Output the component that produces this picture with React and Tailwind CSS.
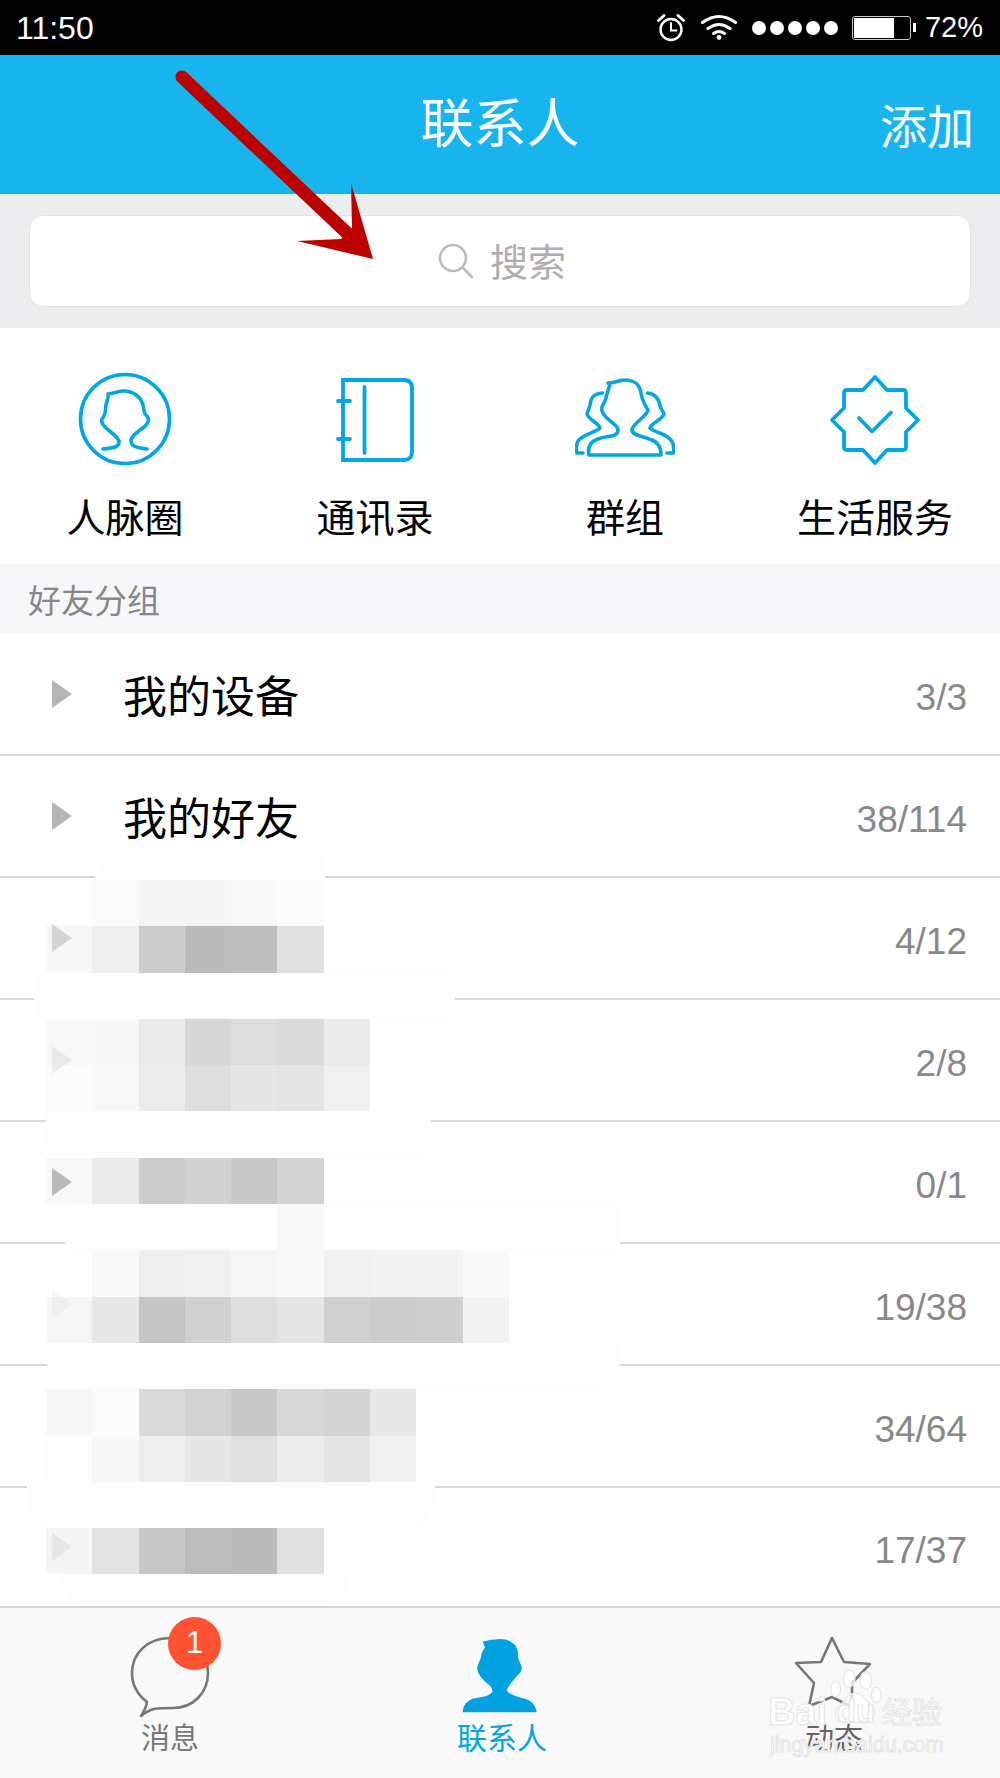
import React from "react";

const rows = [
  { label: "我的设备", count: "3/3", tri: "opacity-100" },
  { label: "我的好友", count: "38/114", tri: "opacity-100" },
  { label: "", count: "4/12", tri: "opacity-50" },
  { label: "", count: "2/8", tri: "opacity-20" },
  { label: "", count: "0/1", tri: "opacity-90" },
  { label: "", count: "19/38", tri: "opacity-10" },
  { label: "", count: "34/64", tri: "opacity-0" },
  { label: "", count: "17/37", tri: "opacity-20" },
];

// mosaic that hides the group names, one array per 46px row
const tiles = [
  ["bg-[#fefefe]", "bg-[#fbfbfb]", "bg-[#f4f4f4]", "bg-[#f5f5f5]", "bg-[#f8f8f8]", "bg-[#fbfbfb]"],
  ["bg-[#f7f7f7]", "bg-[#efefef]", "bg-[#cdcdcd]", "bg-[#bbbbbb]", "bg-[#bebebe]", "bg-[#e1e1e1]"],
  [],
  ["bg-[#f8f8f8]", "bg-[#f7f7f7]", "bg-[#ebebeb]", "bg-[#d7d7d7]", "bg-[#dddddd]", "bg-[#dadada]", "bg-[#ebebeb]"],
  ["bg-[#fcfcfc]", "bg-[#f8f8f8]", "bg-[#ececec]", "bg-[#dddddd]", "bg-[#e6e6e6]", "bg-[#e4e4e4]", "bg-[#f0f0f0]"],
  [],
  ["bg-[#f8f8f8]", "bg-[#ebebeb]", "bg-[#cdcdcd]", "bg-[#d1d1d1]", "bg-[#c8c8c8]", "bg-[#d4d4d4]"],
  ["", "", "", "", "", "bg-[#f8f8f8]"],
  ["", "bg-[#f9f9f9]", "bg-[#eeeeee]", "bg-[#f0f0f0]", "bg-[#f6f6f6]", "bg-[#f9f9f9]", "bg-[#f1f1f1]", "bg-[#f3f3f3]", "bg-[#f3f3f3]", "bg-[#fafafa]"],
  ["bg-[#f6f6f6]", "bg-[#e8e8e8]", "bg-[#c5c5c5]", "bg-[#d1d1d1]", "bg-[#dedede]", "bg-[#e4e4e4]", "bg-[#d0d0d0]", "bg-[#cccccc]", "bg-[#cfcfcf]", "bg-[#f3f3f3]"],
  [],
  ["bg-[#f6f6f6]", "bg-[#fbfbfb]", "bg-[#dadada]", "bg-[#d2d2d2]", "bg-[#c8c8c8]", "bg-[#d8d8d8]", "bg-[#d4d4d4]", "bg-[#e8e8e8]"],
  ["bg-[#fdfdfd]", "bg-[#f7f7f7]", "bg-[#eeeeee]", "bg-[#e6e6e6]", "bg-[#e0e0e0]", "bg-[#ececec]", "bg-[#e5e5e5]", "bg-[#f1f1f1]"],
  [],
  ["bg-[#f5f5f5]", "bg-[#e3e3e3]", "bg-[#c8c8c8]", "bg-[#bcbcbc]", "bg-[#bbbbbb]", "bg-[#e0e0e0]"],
];

const smudges = [
  "left-[95px] top-[221px] w-[230px] h-[25px] rounded-tl-[60px] rounded-tr-[10px]",
  "left-[34px] top-[338px] w-[421px] h-[47px] rounded-[10px]",
  "left-[46px] top-[477px] w-[385px] h-[46px] rounded-b-[10px]",
  "left-[65px] top-[570px] w-[555px] h-[47px] rounded-[6px]",
  "left-[47px] top-[708px] w-[573px] h-[47px] rounded-br-[30px]",
  "left-[27px] top-[847px] w-[408px] h-[47px] rounded-b-[30px]",
  "left-[60px] top-[940px] w-[290px] h-[32px] rounded-b-[60px]",
];

const IconCircle = () => (
  <svg viewBox="0 0 100 100" className="w-[100px] h-[100px]" fill="none" stroke="#00a7e1" strokeWidth="3.6" strokeLinecap="round" strokeLinejoin="round">
    <ellipse cx="50" cy="50" rx="44.5" ry="44.5" />
    <path d="M28 80C36 79 44 79 44 73C44 68 36 64 31 59C27 55 26 52 27 50C31 46 30 43 31 36C32 31 34 28 33 25C40 24 43 22 49 22C58 22 66 28 68 36C69 41 69 45 71 46C75 50 74 53 70 57C65 62 56 66 56 72C56 78 64 79 72 80" />
  </svg>
);

const IconBook = () => (
  <svg viewBox="0 0 100 100" className="w-[100px] h-[100px]" fill="none" stroke="#00a7e1" strokeWidth="3.8" strokeLinecap="round">
    <path d="M18 11H79Q87 11 87 19V83Q87 91 79 91H18Z" strokeLinecap="butt" />
    <path d="M39.5 18V84M13 32H25M13 70H25" />
  </svg>
);

const IconGroup = () => (
  <svg viewBox="0 0 100 100" className="w-[100px] h-[100px]" fill="none" stroke="#00a7e1" strokeWidth="3.6" strokeLinecap="round" strokeLinejoin="round">
    <path d="M14 86C12 76 18 71 26 69C33 67 43 68 43 61C43 55 33 53 28 44C25 39 28 36 30 32C32 26 33 20 35 16L33 14C40 14 44 11 50 11C59 11 65 16 66 24C67 30 69 35 73 41C72 47 60 53 57 60C56 66 66 67 74 70C82 72 86 77 86 86Z" />
    <path d="M27.5 24C20 25 16 27 15 36C14 41 12 43 12 45C14 51 24 54 25 59C20 64 8 65 3 72C1 76 1 80 1.5 84H8" />
    <path d="M72.5 24C80 25 84 29 85 37C86 41 89 43 89 45C87 51 76 54 75 59C80 64 90 64 96 71C99 75 99 80 98.5 84H92" />
  </svg>
);

const IconBadge = () => (
  <svg viewBox="0 0 100 100" className="w-[100px] h-[100px]" fill="none" stroke="#00a7e1" strokeWidth="3.8" strokeLinecap="round" strokeLinejoin="round">
    <path d="M50 8L62 21H78Q81 21 81 24V39L93 51L81 63V78Q81 81 78 81H62L50 94L38 81H22Q19 81 19 78V63L7 51L19 39V24Q19 21 22 21H38Z" />
    <path d="M34 49L47 62.5L66 43.5" />
  </svg>
);

const quick = [
  { icon: <IconCircle />, label: "人脉圈" },
  { icon: <IconBook />, label: "通讯录" },
  { icon: <IconGroup />, label: "群组" },
  { icon: <IconBadge />, label: "生活服务" },
];

function StatusBar() {
  return (
    <div className="h-[55px] bg-black text-white flex items-center pl-[16px] pr-[17px]">
      <span className="text-[32px] leading-none">11:50</span>
      <div className="ml-auto flex items-center">
        <svg viewBox="0 0 30 30" className="w-[30px] h-[30px]" fill="none" stroke="#fff" strokeLinecap="round">
          <circle cx="15" cy="16.5" r="10.5" strokeWidth="2.4" />
          <path d="M15 10V17.5H20.5" strokeWidth="2" />
          <path d="M2.5 7.5L8 2.5M27.5 7.5L22 2.5" strokeWidth="3" />
        </svg>
        <svg viewBox="0 0 36 27" className="w-[36px] h-[27px] ml-[15px]" fill="none" stroke="#fff" strokeWidth="3" strokeLinecap="round">
          <path d="M1.5 8.5Q18 -3.5 34.5 8.5" />
          <path d="M7 14.5Q18 6.5 29 14.5" />
          <path d="M12.5 19.5Q18 15.5 23.5 19.5" />
          <circle cx="18" cy="23.5" r="2.4" fill="#fff" stroke="none" />
        </svg>
        <div className="flex gap-[4px] ml-[15px]">
          <div className="w-[14px] h-[14px] rounded-full bg-white" />
          <div className="w-[14px] h-[14px] rounded-full bg-white" />
          <div className="w-[14px] h-[14px] rounded-full bg-white" />
          <div className="w-[14px] h-[14px] rounded-full bg-white" />
          <div className="w-[14px] h-[14px] rounded-full bg-white" />
        </div>
        <div className="ml-[14px] w-[59px] h-[24px] rounded-[3px] border border-[#c8c8c8] p-[1px]">
          <div className="w-[40px] h-full bg-white" />
        </div>
        <div className="ml-[2px] w-[3px] h-[9px] bg-white" />
        <span className="ml-[9px] text-[29px] leading-none">72%</span>
      </div>
    </div>
  );
}

function TabBar() {
  return (
    <div className="h-[172px] shrink-0 bg-[#f9f9f9] border-t-2 border-[#d4d4d6] grid grid-cols-3 pl-1 pt-[22px]">
      <div className="relative flex flex-col items-center text-[#777777]">
        <svg viewBox="0 0 90 90" className="w-[90px] h-[90px]" fill="none" stroke="#777" strokeWidth="2.6" strokeLinejoin="round">
          <path d="M45 8C22 8 7 24 7 43C7 55 13 65 22 72C21 78 18 83 16 86C21 82 25 80 29 79C35 78 42 78 48 78C68 78 83 63 83 43C83 24 68 8 45 8Z" />
        </svg>
        <span className="text-[29px] leading-[36px] mt-px">消息</span>
        <div className="absolute left-[164px] top-[-13px] w-[53px] h-[53px] rounded-full bg-[#ff5233] text-white text-[31px] flex items-center justify-center">1</div>
      </div>
      <div className="flex flex-col items-center text-[#00a7e1]">
        <svg viewBox="0 0 90 90" className="w-[90px] h-[90px]" fill="#00a2e0">
          <path transform="translate(3 5)" d="M22.7 6.7L25 12.7C22 16 21 20 20.7 23.3C20 26 17.3 29 17.3 33.3C17.3 37 20 41 21.7 43.3C25 47 30 50 31.7 53.3L32.7 56.7C30 60 26 61 23.3 61.7C17 63 13 63 10 65C5 68 3 72 2.7 77.3H76.7C76 72 73 67 68.3 65C64 63 59 63 55 60.7C51 59 48 58 46.7 55C49 50 52 47 55 43.3C58 40 61.7 37 61.7 33.3C61.7 29 59 27 58.3 23.3C58 17 58 14 55 10C51 6 46 4 40 4C36 4 33 5 30 5Z" />
        </svg>
        <span className="text-[30px] leading-[36px] mt-px">联系人</span>
      </div>
      <div className="flex flex-col items-center text-[#666666]">
        <svg viewBox="0 0 90 90" className="w-[90px] h-[90px]" fill="none" stroke="#777" strokeWidth="2.6" strokeLinejoin="round">
          <path d="M43 8L55 32L81 34L63 53L63 77L43 67L20 76L25 53L7 33L32 32Z" />
        </svg>
        <span className="text-[29px] leading-[36px] mt-px">动态</span>
      </div>
    </div>
  );
}

function Watermark() {
  return (
    <div className="absolute left-[760px] top-[1660px] w-[200px] h-[100px] text-white font-bold [-webkit-text-stroke:1px_#e4e4e4]">
      <svg viewBox="0 0 60 60" className="absolute left-[66px] top-[8px] w-[58px] h-[58px]" fill="#fff" fillOpacity="0.75" stroke="#e6e6e6" strokeWidth="1.2">
        <ellipse cx="10" cy="22" rx="5" ry="8" />
        <ellipse cx="24" cy="11" rx="6" ry="9" />
        <ellipse cx="41" cy="13" rx="6" ry="9" />
        <ellipse cx="52" cy="28" rx="5" ry="8" />
        <path d="M30 26C22 26 20 34 14 39C6 46 10 58 22 57C27 56 33 56 38 57C50 58 54 46 47 39C41 34 38 26 30 26Z" />
      </svg>
      <span className="absolute left-[8px] top-[30px] text-[38px] leading-[44px]">Bai</span>
      <span className="absolute left-[77px] top-[30px] text-[31px] leading-[44px]">du</span>
      <span className="absolute left-[122px] top-[33px] text-[30px] leading-[40px] font-normal">经验</span>
      <span className="absolute left-[10px] top-[70px] text-[21.5px] leading-[30px] font-normal whitespace-nowrap">jingyan.baidu.com</span>
    </div>
  );
}

export default function App() {
  return (
    <div className="relative w-[1000px] h-[1778px] overflow-hidden bg-white flex flex-col [font-family:'Liberation_Sans','Noto_Sans_CJK_SC',sans-serif]">
      <StatusBar />

      <header className="h-[139px] bg-[#18b4ed] text-white grid grid-cols-[1fr_auto_1fr] items-center pr-[26px]">
        <div />
        <h1 className="text-[53px] leading-none font-normal pl-[26px]">联系人</h1>
        <span className="text-[47px] leading-none text-right pt-[6px]">添加</span>
      </header>

      <div className="h-[134px] bg-[#ebedef] px-[29px] pt-[21px]">
        <div className="h-[92px] rounded-[14px] bg-white border border-[#e2e3e5] flex items-center justify-center gap-[16px] pl-[4px]">
          <svg viewBox="0 0 36 36" className="w-[36px] h-[36px]" fill="none" stroke="#bcbcbc" strokeWidth="2.6" strokeLinecap="round">
            <circle cx="15" cy="15" r="13" />
            <path d="M24.5 24.5L34 34" />
          </svg>
          <span className="text-[38px] leading-none text-[#aeaeae] pt-[4px]">搜索</span>
        </div>
      </div>

      <nav className="h-[236px] grid grid-cols-4 pt-[41px]">
        {quick.map((q) => (
          <div key={q.label} className="flex flex-col items-center">
            {q.icon}
            <span className="text-[39px] leading-[48px] mt-[26px] text-black">{q.label}</span>
          </div>
        ))}
      </nav>

      <div className="h-[70px] shrink-0 bg-[#f6f7f9] flex items-center pl-[28px] pt-[5px] text-[33px] text-[#888888]">好友分组</div>

      <div className="relative flex-1 flex flex-col">
        {rows.map((r, i) => (
          <div key={r.count} className={i < 7 ? "h-[122px] shrink-0 border-b-2 border-[#d8d8dc] flex items-center" : "flex-1 flex items-center"}>
            <svg viewBox="0 0 20 28" className={"relative z-10 ml-[52px] w-[20px] h-[28px] " + r.tri} fill="#b4b4b4">
              <path d="M0 0L20 14L0 28Z" />
            </svg>
            <span className="ml-[51px] pt-[8px] text-[44px] leading-none text-black">{r.label}</span>
            <span className="relative z-10 ml-auto pr-[33px] pt-[6px] text-[37px] leading-none text-[#888888]">{r.count}</span>
          </div>
        ))}

        {smudges.map((s) => (
          <div key={s} className={"absolute z-[4] bg-[#fdfdfd] " + s} />
        ))}
        <div className="absolute z-[5] left-[46px] top-[246px] grid grid-cols-[repeat(10,46.3px)] auto-rows-[46.3px]">
          {tiles.map((row, y) =>
            Array.from({ length: 10 }).map((_, x) => <div key={y + "-" + x} className={row[x] || ""} />)
          )}
        </div>
      </div>

      <TabBar />

      {/* red annotation arrow */}
      <svg viewBox="0 0 1000 1778" className="absolute left-0 top-0 w-[1000px] h-[1778px] pointer-events-none z-20">
        <path d="M182 77L347 233" stroke="#bb0000" strokeWidth="13" strokeLinecap="round" />
        <path d="M373 259L351 183L352 228L341 239L297 241Z" fill="#bb0000" />
      </svg>

      <Watermark />
    </div>
  );
}
